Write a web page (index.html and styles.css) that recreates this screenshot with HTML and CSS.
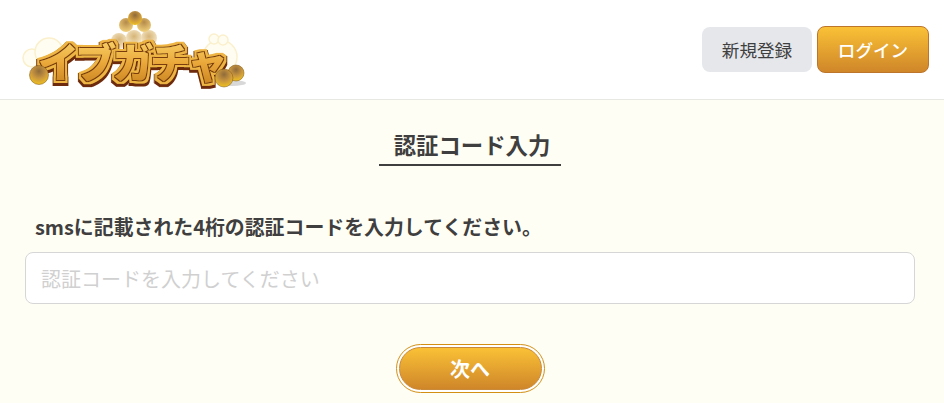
FILE: index.html
```html
<!DOCTYPE html>
<html lang="ja">
<head>
<meta charset="UTF-8">
<meta name="viewport" content="width=device-width, initial-scale=1.0">
<title>認証コード入力</title>
<link rel="stylesheet" href="styles.css">
</head>
<body>

<header class="site-header">
    <svg class="logo" width="230" height="82" viewBox="0 0 230 82" role="img" aria-label="イブガチャ">
        <defs>
            <linearGradient id="letter" x1="0" y1="0" x2="0" y2="1">
                <stop offset="0" stop-color="#ffe27a"/>
                <stop offset="0.55" stop-color="#eaa83a"/>
                <stop offset="1" stop-color="#c27c1c"/>
            </linearGradient>
            <radialGradient id="ball" cx="0.5" cy="0.3" r="0.75">
                <stop offset="0" stop-color="#8f6a3a"/>
                <stop offset="0.5" stop-color="#c9963f"/>
                <stop offset="1" stop-color="#f5c71c"/>
            </radialGradient>
            <radialGradient id="midball" cx="0.5" cy="0.3" r="0.75">
                <stop offset="0" stop-color="#b58a4a"/>
                <stop offset="1" stop-color="#f5d680"/>
            </radialGradient>
            <radialGradient id="paleball" cx="0.5" cy="0.4" r="0.7">
                <stop offset="0" stop-color="#d6b476"/>
                <stop offset="1" stop-color="#fbf1d8"/>
            </radialGradient>
            <!-- dark line, gold rim and brown outline around the letters -->
            <filter id="word-edge" x="-10%" y="-30%" width="120%" height="160%">
                <feMorphology in="SourceAlpha" operator="dilate" radius="4.2" result="outer"/>
                <feOffset in="outer" dy="1.5" result="outer-low"/>
                <feFlood flood-color="#6e2a0c"/>
                <feComposite in2="outer-low" operator="in" result="brown"/>
                <feMorphology in="SourceAlpha" operator="dilate" radius="2.6" result="mid"/>
                <feFlood flood-color="#eeb544"/>
                <feComposite in2="mid" operator="in" result="rim"/>
                <feMorphology in="SourceAlpha" operator="dilate" radius="0.8" result="inner"/>
                <feFlood flood-color="#7a3a0e"/>
                <feComposite in2="inner" operator="in" result="line"/>
                <feMerge>
                    <feMergeNode in="brown"/>
                    <feMergeNode in="rim"/>
                    <feMergeNode in="line"/>
                    <feMergeNode in="SourceGraphic"/>
                </feMerge>
            </filter>
        </defs>
        <!-- bubbles behind the letters -->
        <g fill="#fffdf2" stroke="#fbf0cc" stroke-width="1.5">
            <circle cx="14" cy="49" r="9"/>
            <circle cx="31" cy="43" r="14"/>
            <circle cx="202" cy="48" r="17"/>
            <circle cx="196" cy="30" r="5"/>
            <circle cx="205" cy="31" r="5"/>
        </g>
        <!-- balls on top -->
        <circle cx="101" cy="32" r="8" fill="url(#paleball)"/>
        <circle cx="116" cy="29" r="8" fill="url(#paleball)"/>
        <circle cx="131" cy="29" r="8" fill="url(#paleball)"/>
        <circle cx="108" cy="16" r="7" fill="url(#midball)"/>
        <circle cx="126" cy="16" r="7" fill="url(#midball)"/>
        <circle cx="117" cy="9" r="7" fill="url(#ball)"/>
        <text class="logo-word" x="20" y="69" textLength="190" lengthAdjust="spacing">イブガチャ</text>
        <ellipse cx="214" cy="74" rx="14" ry="3" fill="#d8d8d8"/>
        <g stroke="#7b5010" stroke-width="0.5">
            <circle cx="21" cy="66" r="9.5" fill="url(#ball)"/>
            <circle cx="218" cy="64" r="8" fill="url(#ball)"/>
            <circle cx="206" cy="69" r="9" fill="url(#ball)"/>
        </g>
    </svg>
    <nav class="header-buttons">
        <a class="btn btn-gray">新規登録</a>
        <a class="btn btn-gold">ログイン</a>
    </nav>
</header>

<main class="content">
    <div class="title-row">
        <h1 class="page-title">認証コード入力</h1>
    </div>
    <p class="lead">smsに記載された4桁の認証コードを入力してください。</p>
    <input class="code-input" type="text" placeholder="認証コードを入力してください">
    <div class="submit-row">
        <button class="submit-ring" type="button"><span class="submit-inner">次へ</span></button>
    </div>
</main>

</body>
</html>
```

FILE: styles.css
```css
html, body {
    margin: 0;
    padding: 0;
}

body {
    height: 403px;
    overflow: hidden;
    background-color: #fffef5;
    color: #3f3f3f;
    font-family: "Noto Sans CJK JP", "Noto Sans", sans-serif;
}

.site-header {
    display: flex;
    justify-content: space-between;
    align-items: center;
    box-sizing: border-box;
    height: 100px;
    padding: 0 15px 0 18px;
    background-color: #fff;
    border-bottom: 1px solid #e8e8e2;
}

.logo-word {
    font-family: "Noto Sans CJK JP", sans-serif;
    font-size: 41px;
    font-weight: 900;
    fill: url(#letter);
    filter: url(#word-edge);
}

.header-buttons {
    display: flex;
    align-items: center;
    gap: 5px;
}

.btn {
    display: flex;
    align-items: center;
    justify-content: center;
    box-sizing: border-box;
    font-size: 17.6px;
}

.btn-gray {
    width: 110px;
    height: 45px;
    background-color: #e5e7eb;
    border-radius: 8px;
    color: #3f3f3f;
    font-weight: 400;
}

.btn-gold {
    width: 112px;
    height: 47px;
    background: linear-gradient(#fac136, #cf8629);
    border: 1px solid #bd742b;
    border-radius: 8px;
    color: #fff;
    font-weight: 500;
}

.content {
    padding: 0 29px 0 25px;
}

.title-row {
    display: flex;
    justify-content: center;
    padding-top: 28px;
}

.page-title {
    box-sizing: border-box;
    width: 182px;
    height: 38px;
    margin: 0;
    padding-left: 4px;
    border-bottom: 2px solid #3f3f3f;
    font-size: 22.4px;
    font-weight: 700;
    line-height: 32px;
    text-align: center;
}

.lead {
    margin: 45px 0 9px 10px;
    font-size: 19.9px;
    font-weight: 700;
    line-height: 32px;
}

.code-input {
    display: block;
    box-sizing: border-box;
    width: 890px;
    height: 52px;
    padding: 0 15px;
    background-color: #fff;
    border: 1px solid #d6d6d6;
    border-radius: 8px;
    color: #3f3f3f;
    font-family: inherit;
    font-size: 20px;
    outline: none;
}

.code-input::placeholder {
    color: #d0d0d0;
}

.submit-row {
    display: flex;
    justify-content: center;
    margin-top: 40px;
}

.submit-ring {
    display: block;
    box-sizing: border-box;
    width: 149px;
    height: 49px;
    padding: 2px;
    background-color: #fff;
    border: 1px solid #d28f14;
    border-radius: 25px;
    font-family: inherit;
}

.submit-inner {
    display: flex;
    align-items: center;
    justify-content: center;
    height: 100%;
    background: linear-gradient(#fac136, #cf8629);
    border: 1px solid #c98a3a;
    border-radius: 22px;
    box-sizing: border-box;
    color: #fff;
    font-size: 20px;
    font-weight: 700;
}
```
